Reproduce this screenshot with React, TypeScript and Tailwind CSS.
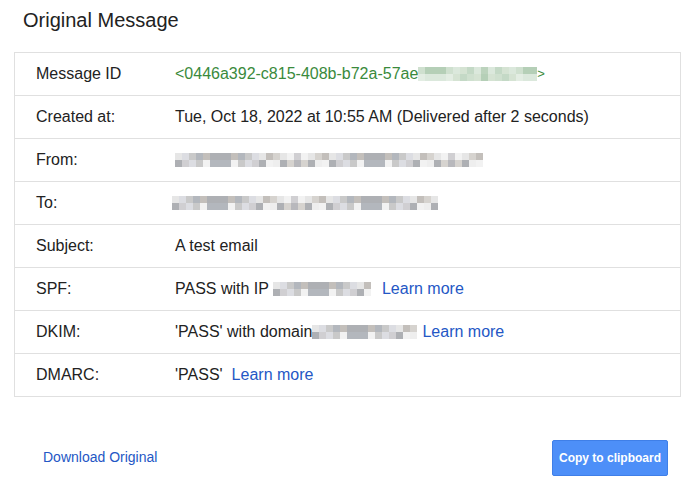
import type { ReactNode } from 'react';

const font = { fontFamily: '"Liberation Sans", Arial, sans-serif' };

// pixelated redaction block
function Redacted({ width, tint = 'gray', className = '' }: { width: number; tint?: 'gray' | 'green'; className?: string }) {
  const cols = Math.floor(width / 7);
  const grays = ['#e6e6e6', '#c9c9c9', '#b8b8bc', '#d6d3cf', '#aeb0b4', '#dcdde2', '#c3bfbb', '#eeeeee', '#b3b7bd', '#d0cfd2', '#f2f2f2'];
  const greens = ['#cfe0cf', '#bcd3bd', '#dbe8dc', '#c4d9c6', '#e3ede3', '#b5cfb7', '#d5e3d3'];
  const pal = tint === 'green' ? greens : grays;
  const cells = [];
  for (let r = 0; r < 2; r++) {
    for (let c = 0; c < cols; c++) {
      const color = pal[(c * 5 + r * 4 + ((c * c) >> 1)) % pal.length];
      cells.push(<span key={r + '-' + c} className="block w-[7px] h-[7px]" style={{ background: color }} />);
    }
  }
  return (
    <span className={'inline-grid align-middle ' + className} style={{ gridTemplateColumns: `repeat(${cols}, 7px)` }}>
      {cells}
    </span>
  );
}

function Row({ label, children, last }: { label: string; children: ReactNode; last?: boolean }) {
  return (
    <div className={'grid grid-cols-[160px_1fr] items-center ' + (last ? 'h-[42px]' : 'h-[43px] border-b border-[#e0e0e0]')}>
      <div className="pl-[21px]">{label}</div>
      <div className="flex items-center whitespace-nowrap">{children}</div>
    </div>
  );
}

const Learn = () => <a className="text-[#2457c5]">Learn more</a>;

export default function App() {
  return (
    <div className="w-[695px] h-[496px] bg-white text-[#222] text-[16px]" style={font}>
      <h1 className="pl-[23px] pt-[8px] text-[20px] leading-[24px] text-[#222]">Original Message</h1>

      <div className="mx-[14px] mt-[20px] border border-[#e0e0e0]">
        <Row label="Message ID">
          <span className="text-[#3a8a3c]">&lt;0446a392-c815-408b-b72a-57ae</span>
          <Redacted width={119} tint="green" />
          <span className="text-[#3a8a3c] text-[13px]">&gt;</span>
        </Row>
        <Row label="Created at:">Tue, Oct 18, 2022 at 10:55 AM (Delivered after 2 seconds)</Row>
        <Row label="From:">
          <Redacted width={308} />
        </Row>
        <Row label="To:">
          <Redacted width={266} className="-ml-[3px]" />
        </Row>
        <Row label="Subject:">A test email</Row>
        <Row label="SPF:">
          <span>PASS with IP</span>
          <Redacted width={101} className="ml-[4px] mr-[11px]" />
          <Learn />
        </Row>
        <Row label="DKIM:">
          <span>'PASS' with domain</span>
          <Redacted width={105} className="mr-[5px]" />
          <Learn />
        </Row>
        <Row label="DMARC:" last>
          <span className="mr-[9px]">'PASS'</span>
          <Learn />
        </Row>
      </div>

      <div className="flex items-center justify-between pl-[43px] pr-[27px] mt-[43px]">
        <a className="text-[#2457c5] text-[14px] -mt-[2px]">Download Original</a>
        <button className="h-[36px] w-[116px] rounded-[2px] bg-[#4d8ff8] border border-[#3f7fe8] text-white text-[12px] font-bold">
          Copy to clipboard
        </button>
      </div>
    </div>
  );
}
